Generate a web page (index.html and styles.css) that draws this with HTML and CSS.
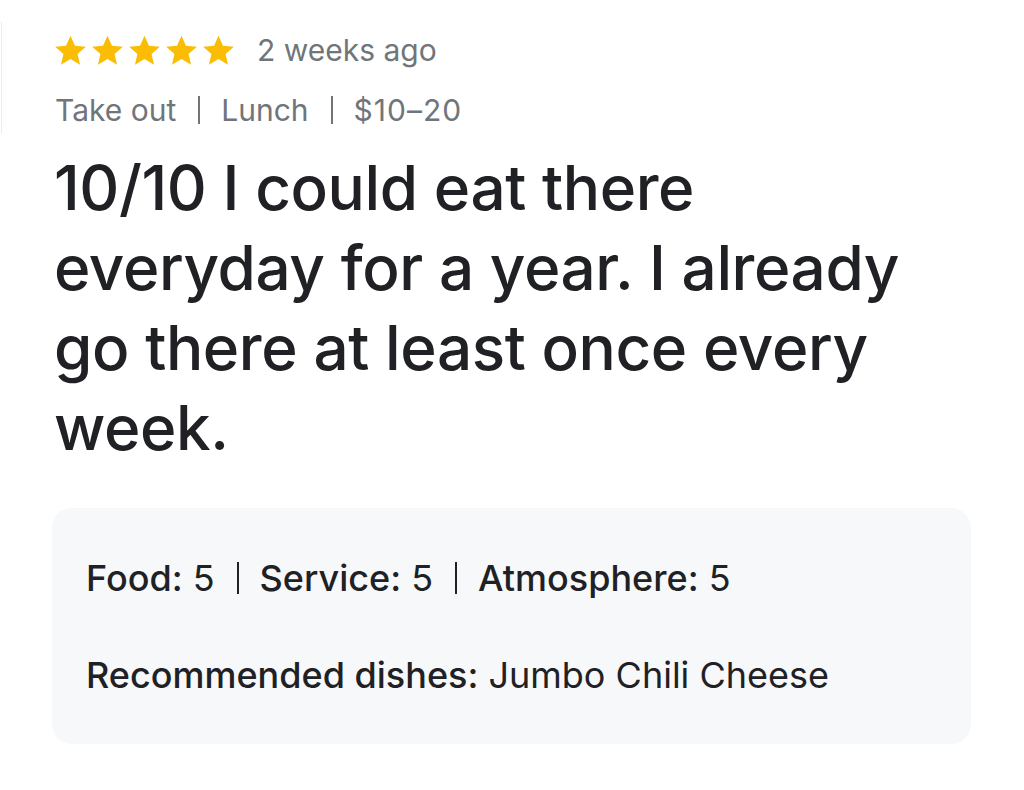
FILE: index.html
```html
<!DOCTYPE html>
<html lang="en">
<head>
<meta charset="utf-8">
<title>Review</title>
<link rel="stylesheet" href="styles.css">
</head>
<body>
<div class="edge"></div>
<main class="review">
  <div class="top">
    <div class="stars" aria-label="5 stars">
      <svg viewBox="0 0 24 24" class="star"><path d="M12 1.8l3.05 6.9 7.45.7-5.65 4.95 1.7 7.35L12 17.85 5.45 21.7l1.7-7.35L1.5 9.4l7.45-.7z"/></svg>
      <svg viewBox="0 0 24 24" class="star"><path d="M12 1.8l3.05 6.9 7.45.7-5.65 4.95 1.7 7.35L12 17.85 5.45 21.7l1.7-7.35L1.5 9.4l7.45-.7z"/></svg>
      <svg viewBox="0 0 24 24" class="star"><path d="M12 1.8l3.05 6.9 7.45.7-5.65 4.95 1.7 7.35L12 17.85 5.45 21.7l1.7-7.35L1.5 9.4l7.45-.7z"/></svg>
      <svg viewBox="0 0 24 24" class="star"><path d="M12 1.8l3.05 6.9 7.45.7-5.65 4.95 1.7 7.35L12 17.85 5.45 21.7l1.7-7.35L1.5 9.4l7.45-.7z"/></svg>
      <svg viewBox="0 0 24 24" class="star"><path d="M12 1.8l3.05 6.9 7.45.7-5.65 4.95 1.7 7.35L12 17.85 5.45 21.7l1.7-7.35L1.5 9.4l7.45-.7z"/></svg>
    </div>
    <span class="when">2 weeks ago</span>
  </div>
  <div class="meta">
    <span>Take out</span><span class="sep"></span><span>Lunch</span><span class="sep"></span><span class="price">$10–20</span>
  </div>
  <h1 class="text">10/10 I could eat there everyday for a year. I already go there at least once every week.</h1>
  <section class="details">
    <p class="row"><b>Food:</b>&nbsp;5<span class="bar"></span><b>Service:</b>&nbsp;5<span class="bar"></span><b>Atmosphere:</b>&nbsp;5</p>
    <p class="row"><b>Recommended dishes:</b>&nbsp;Jumbo Chili Cheese</p>
  </section>
</main>
</body>
</html>
```

FILE: styles.css
```css
html, body {
  margin: 0;
  padding: 0;
  background: #ffffff;
}
body {
  position: relative;
  font-family: Inter, "Liberation Sans", sans-serif;
  color: #202124;
}
.edge {
  position: absolute;
  left: 1px;
  top: 22px;
  width: 1px;
  height: 112px;
  background: #ececec;
}
.review {
  padding: 31px 0 0 52px;
  width: 919px;
}
.top {
  display: flex;
  align-items: center;
  height: 38px;
  padding-left: 1px;
}
.stars {
  display: flex;
  gap: 2px;
}
.star {
  width: 35px;
  height: 35px;
  fill: #fbbc04;
}
.when {
  margin-left: 21px;
  font-size: 30px;
  color: #70757a;
}
.meta {
  display: flex;
  align-items: center;
  margin-top: 22px;
  height: 38px;
  padding-left: 3px;
  font-size: 30px;
  color: #70757a;
}
.price {
  letter-spacing: 1px;
}
.sep {
  width: 2px;
  height: 28px;
  background: #70757a;
  margin: 0 21px 0 22px;
}
.text {
  margin: 19px 0 0 0;
  padding-left: 2px;
  font-size: 62px;
  line-height: 80px;
  font-weight: 500;
  letter-spacing: -0.4px;
  width: 900px;
  color: #202124;
}
.details {
  margin-top: 40px;
  background: #f7f8fa;
  border-radius: 20px;
  height: 236px;
  box-sizing: border-box;
  padding: 48px 34px 0;
}
.row {
  margin: 0;
  display: flex;
  align-items: center;
  height: 44px;
  font-size: 36px;
  color: #202124;
}
.row + .row {
  margin-top: 53px;
}
.row b {
  font-weight: 500;
}
.bar {
  width: 2px;
  height: 32px;
  background: #202124;
  margin: 0 21px 0 22px;
}
```
